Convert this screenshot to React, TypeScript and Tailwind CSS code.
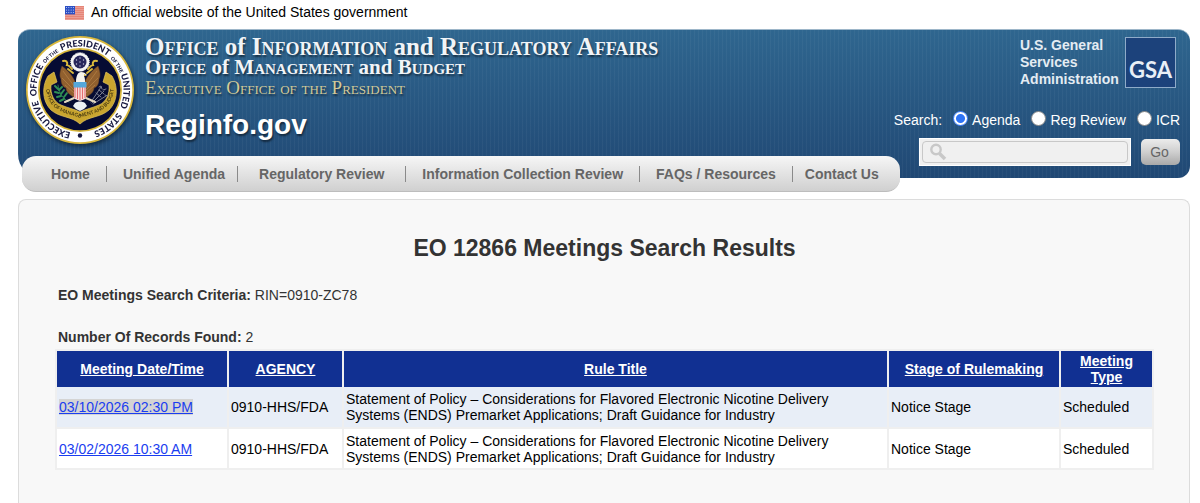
import { useState } from 'react'

type SearchScope = 'agenda' | 'review' | 'icr'

const navItems = [
  { label: 'Home', className: 'pl-[29px] pr-4' },
  { label: 'Unified Agenda', className: 'border-l pl-4 pr-3' },
  { label: 'Regulatory Review', className: 'border-l pl-[21px] pr-[21px]' },
  { label: 'Information Collection Review', className: 'border-l pl-4 pr-4' },
  { label: 'FAQs / Resources', className: 'border-l pl-4 pr-4' },
  { label: 'Contact Us', className: 'border-l pl-3 pr-[21px]' },
]

const scopes: { key: SearchScope; label: string }[] = [
  { key: 'agenda', label: 'Agenda' },
  { key: 'review', label: 'Reg Review' },
  { key: 'icr', label: 'ICR' },
]

const columns = [
  { label: 'Meeting Date/Time', className: 'w-[172px]' },
  { label: 'AGENCY', className: 'w-[115px]' },
  { label: 'Rule Title', className: '' },
  { label: 'Stage of Rulemaking', className: 'w-[172px]' },
  { label: 'Meeting Type', className: 'w-[93px]' },
]

const ruleTitle =
  'Statement of Policy – Considerations for Flavored Electronic Nicotine Delivery Systems (ENDS) Premarket Applications; Draft Guidance for Industry'

const meetings = [
  { date: '03/10/2026 02:30 PM', agency: '0910-HHS/FDA', title: ruleTitle, stage: 'Notice Stage', type: 'Scheduled', visited: true },
  { date: '03/02/2026 10:30 AM', agency: '0910-HHS/FDA', title: ruleTitle, stage: 'Notice Stage', type: 'Scheduled', visited: false },
]

function Flag() {
  return (
    <svg className="mt-[2px] h-[14px] w-[19px]" viewBox="0 0 19 14" aria-hidden="true">
      <rect width="19" height="14" fill="#f6dcd8" />
      {[0, 2, 4, 6, 8, 10, 12].map((y) => (
        <rect key={y} y={y + 0.3} width="19" height="1.2" fill="#e0604f" />
      ))}
      <rect width="10" height="8.4" fill="#2c50c4" />
      {[1.5, 4, 6.5].map((y) =>
        [1.5, 3.8, 6.1, 8.4].map((x) => <circle key={`${x}-${y}`} cx={x} cy={y} r=".5" fill="#dbe3ff" />)
      )}
    </svg>
  )
}

const ringWords = [
  { text: 'EXECUTIVE', at: '12.3%', size: 9 },
  { text: 'OFFICE', at: '28.5%', size: 9 },
  { text: 'OF THE', at: '38.6%', size: 5 },
  { text: 'PRESIDENT', at: '52%', size: 9 },
  { text: 'OF THE', at: '65.4%', size: 5 },
  { text: 'UNITED', at: '75.4%', size: 9 },
  { text: 'STATES', at: '89.3%', size: 9 },
]

function Seal() {
  return (
    <svg className="size-[108px] shrink-0 drop-shadow-[1px_2px_2px_rgba(0,0,0,0.5)]" viewBox="0 0 108 108" aria-hidden="true">
      <defs>
        <path id="ring" d="M54 97.5A43.5 43.5 0 0 1 54 10.5A43.5 43.5 0 0 1 54 97.5" />
        <path id="scroll" d="M20 52C21 64 26 71 35 75.500C42 79 48 79 54 82C60 79 66 79 73 75.500C82 71 87 64 88 52" />
      </defs>
      <circle cx="54" cy="54" r="54" fill="#d9b83c" />
      <circle cx="54" cy="54" r="52.300" fill="#fff" />
      <circle cx="54" cy="54" r="42" fill="#d9b83c" />
      <circle cx="54" cy="54" r="40.300" fill="#060b33" />
      {ringWords.map((w) => (
        <text key={w.at} fontFamily="Lato, sans-serif" fontWeight="900" fontSize={w.size} fill="#17183f" textAnchor="middle">
          <textPath href="#ring" startOffset={w.at}>{w.text}</textPath>
        </text>
      ))}
      <circle cx="54" cy="99.500" r="2.200" fill="#17183f" />

      {/* scroll */}
      <path
        d="M22 40C15 52 17 66 25 74C34 82 46 80 54 88C62 80 74 82 83 74C91 66 93 52 86 40L80 36L77 46L83 49C84 58 80 66 73 69C66 72 60 73 54 76C48 73 42 72 35 69C28 66 24 58 25 49L31 46L28 36Z"
        fill="#c9a52f"
        stroke="#e6c85c"
        strokeWidth=".7"
      />
      <text fontFamily="Lato, sans-serif" fontWeight="700" fontSize="5" fill="#4a3c12" textAnchor="middle">
        <textPath href="#scroll" startOffset="50%">OFFICE OF MANAGEMENT AND BUDGET</textPath>
      </text>

      {/* olive branch and arrows */}
      <g stroke="#2f8f55" strokeWidth="2" strokeLinecap="round" fill="none">
        <path d="M43 66C37 63 33 57 32 49" strokeWidth=".8" />
        <path d="M32 53l-3-3M33 57l-4-1M35 60l-4 1M38 63l-4 2M33 54l3-3M35 58l3-4M38 61l3-4" />
      </g>
      <g stroke="#7d8090" strokeWidth="1" strokeLinecap="round" fill="none">
        <path d="M65 66L75 51M66 67l12-12M67 68l13-8M73 51l2-1 1 3M77 54l3-1M79 59l3 1M70 57l5 4M73 54l5 4" />
      </g>

      {/* wings */}
      <g fill="#91602f" stroke="#5f3d1c" strokeWidth=".5">
        <path d="M50 48c-2-6-6-12-14-18-2 5-3 10-1 13 0 5 2 8 5 9 0 4 4 7 9 10z" />
        <path d="M58 48c2-6 6-12 14-18 2 5 3 10 1 13 0 5-2 8-5 9 0 4-4 7-9 10z" />
      </g>
      <g stroke="#bd8a4c" strokeWidth=".6" fill="none">
        <path d="M37 35l11 15M36 42l12 12M39 49l9 8M71 35L60 50M72 42L60 54M69 49l-9 8" />
      </g>
      <g stroke="#d9b83c" strokeWidth="2" fill="none" strokeLinecap="round">
        <path d="M37 25c3-1 5 1 4 4 2 0 3 2 5 4M71 25c-3-1-5 1-4 4-2 0-3 2-5 4M42 33l5 4M66 33l-5 4" />
      </g>

      {/* glory */}
      <circle cx="54" cy="26" r="9.300" fill="#f4f4f4" stroke="#fff" strokeWidth="1" strokeDasharray="1 1" />
      <circle cx="54" cy="26" r="6.500" fill="#27275c" />
      <g fill="#c9cbe0">
        {[[54, 22], [50.5, 24], [57.5, 24], [54, 26], [50.5, 28], [57.5, 28], [54, 30]].map(([x, y]) => (
          <circle key={`${x}-${y}`} cx={x} cy={y} r=".7" />
        ))}
      </g>

      {/* head, shield and tail */}
      <path d="M50 46c0-6 2-10 5-10 3 0 4 1 6 3l-3 1c1 2 1 4 1 6z" fill="#f5f3ec" />
      <path d="M58 38l3 1.500-3 .5z" fill="#d9b83c" />
      <path d="M48 62l-9 4M60 62l9 4" stroke="#e3d9c0" strokeWidth="2" strokeLinecap="round" />
      <path d="M49 67c3-2 7-2 10 0l2 3-3 3-4 2-4-2-3-3z" fill="#edf0f5" />
      <path d="M48 51h12v10c0 2-3 3-6 4-3-1-6-2-6-4z" fill="#f8dedc" />
      <path d="M49 51v11M51.500 51v12M54 51v13M56.500 51v12M59 51v11" stroke="#e46d70" strokeWidth="1.100" />
      <path d="M47.500 46h13v5.500h-13z" fill="#55a8dc" />
    </svg>
  )
}

function GsaLogo() {
  return (
    <div className="flex size-[51px] items-end justify-center border border-[#8fabc9] bg-[#1c427b] pb-[5px] font-['Lato',sans-serif] text-[22px] leading-6 font-bold text-[#e9eff6]">
      GSA
    </div>
  )
}

function SearchIcon() {
  return (
    <svg className="size-[18px] shrink-0" viewBox="0 0 18 18" fill="none" stroke="#c8c8c8" aria-hidden="true">
      <circle cx="7" cy="6.500" r="4.700" strokeWidth="2.400" />
      <path d="M10.500 10.500L16 16" strokeWidth="3.600" />
    </svg>
  )
}

function SearchForm() {
  const [scope, setScope] = useState<SearchScope>('agenda')
  const [query, setQuery] = useState('')

  return (
    <form className="mt-[22px] flex flex-col items-end" onSubmit={(e) => e.preventDefault()}>
      <div className="flex h-5 items-center gap-[11px] text-white">
        <span>Search:</span>
        {scopes.map((s) => (
          <label key={s.key} className="flex items-center gap-1">
            <input
              type="radio"
              name="scope"
              checked={scope === s.key}
              onChange={() => setScope(s.key)}
              className="mb-1 size-[15px] appearance-none rounded-full border border-[#858585] bg-white checked:border-[#2f74f5] checked:bg-[radial-gradient(circle,#2f74f5_4px,#fff_5px)]"
            />
            {s.label}
          </label>
        ))}
      </div>
      <div className="mt-2 flex items-center gap-[10px]">
        <div className="h-7 w-[212px] border border-white bg-[#f0f0f0] p-[2px]">
          <label className="flex h-full items-center rounded-sm border border-[#c8c8c8] pl-[6px]">
            <SearchIcon />
            <input
              type="text"
              aria-label="Search"
              value={query}
              onChange={(e) => setQuery(e.target.value)}
              className="min-w-0 flex-1 bg-transparent px-1 text-[#333] outline-none"
            />
          </label>
        </div>
        <button
          type="submit"
          className="h-[26px] w-[39px] rounded-[5px] bg-linear-to-b from-[#ececec] via-[#cfcfcf] to-[#a9a9a9] pr-[2px] text-[#666]"
        >
          Go
        </button>
      </div>
    </form>
  )
}

function Header() {
  return (
    <header>
      <div className="flex h-[149px] justify-between rounded-xl rounded-bl-3xl border-t border-[#9db6c9] bg-[repeating-linear-gradient(90deg,rgba(255,255,255,0.04)_0_1px,transparent_1px_4px),linear-gradient(#2f668f,#204874)] pr-[10px] pl-2">
        <div className="flex gap-[11px] pt-[6px]">
          <Seal />
          <div className="font-['Liberation_Serif',serif] whitespace-nowrap text-[#f1f4f7] [text-shadow:1px_2px_2px_rgba(0,0,0,0.5)]">
            <p className="text-[25px] leading-[21px] font-bold [font-variant:small-caps]">
              Office <span className="[font-variant:normal]">of</span> Information{' '}
              <span className="[font-variant:normal]">and</span> Regulatory Affairs
            </p>
            <p className="text-[21px] leading-[21px] font-bold [font-variant:small-caps]">
              Office <span className="[font-variant:normal]">of</span> Management{' '}
              <span className="[font-variant:normal]">and</span> Budget
            </p>
            <p className="text-[19px] leading-[19px] text-[#d2ca98] [font-variant:small-caps]">
              Executive Office of the President
            </p>
            <p className="mt-3 font-['Liberation_Sans',sans-serif] text-[28px] leading-8 font-bold text-white">Reginfo.gov</p>
          </div>
        </div>
        <div className="flex flex-col items-end pt-[7px]">
          <div className="mr-1 flex gap-[5px]">
            <p className="w-[100px] leading-[17px] font-bold text-[#e4ecf3]">U.S. General Services Administration</p>
            <GsaLogo />
          </div>
          <SearchForm />
        </div>
      </div>
      <nav className="relative -mt-[22px] ml-1 w-fit">
        <ul className="flex h-9 items-center rounded-[14px] border-b border-[#bdbdbd] bg-linear-to-b from-[#f6f6f6] to-[#d0d0d0] leading-4 font-bold whitespace-nowrap text-[#666]">
          {navItems.map((item) => (
            <li key={item.label} className={`border-[#8a8a8a] ${item.className}`}>
              <a href="#">{item.label}</a>
            </li>
          ))}
        </ul>
      </nav>
    </header>
  )
}

function MeetingsTable() {
  return (
    <table className="mt-1 w-full table-fixed border-collapse border-2 border-[#efefef] leading-4 text-black">
      <thead>
        <tr className="h-[37px] bg-[#113092] text-white">
          {columns.map((col) => (
            <th key={col.label} className={`border-x-2 border-t-2 border-[#efefef] px-[2px] ${col.className}`}>
              <a href="#" className="underline">{col.label}</a>
            </th>
          ))}
        </tr>
      </thead>
      <tbody>
        {meetings.map((m) => (
          <tr key={m.date} className="h-[41px] odd:bg-[#e8eef7] even:bg-white">
            <td className="border-x-2 border-b-2 border-[#efefef] px-[2px]">
              <a href="#" className={m.visited ? 'bg-[#d4d4d4] text-[#1a3df0] underline' : 'text-[#1a3df0] underline'}>
                {m.date}
              </a>
            </td>
            <td className="border-x-2 border-b-2 border-[#efefef] px-[2px]">{m.agency}</td>
            <td className="border-x-2 border-b-2 border-[#efefef] px-[2px]">{m.title}</td>
            <td className="border-x-2 border-b-2 border-[#efefef] px-[2px]">{m.stage}</td>
            <td className="border-x-2 border-b-2 border-[#efefef] px-[2px]">{m.type}</td>
          </tr>
        ))}
      </tbody>
    </table>
  )
}

export default function App() {
  return (
    <div className="flex min-h-screen flex-col bg-white pr-[10px] pl-[18px] font-['Liberation_Sans',Arial,sans-serif] text-[14px] leading-4">
      <div className="flex gap-[7px] pt-1 pb-[9px] pl-[47px] text-black">
        <Flag />
        <p>An official website of the United States government</p>
      </div>
      <Header />
      <main className="mt-[7px] flex-1 rounded-t-lg border border-b-0 border-[#dcdcdc] bg-[#f8f8f8] pt-8 pr-[35px] pl-9 text-[#333]">
        <h1 className="text-center text-[23px] leading-8 font-bold">EO 12866 Meetings Search Results</h1>
        <p className="mt-[23px] pl-[3px]">
          <b>EO Meetings Search Criteria:</b> RIN=0910-ZC78
        </p>
        <p className="mt-[26px] pl-[3px]">
          <b>Number Of Records Found:</b> 2
        </p>
        <MeetingsTable />
      </main>
    </div>
  )
}
